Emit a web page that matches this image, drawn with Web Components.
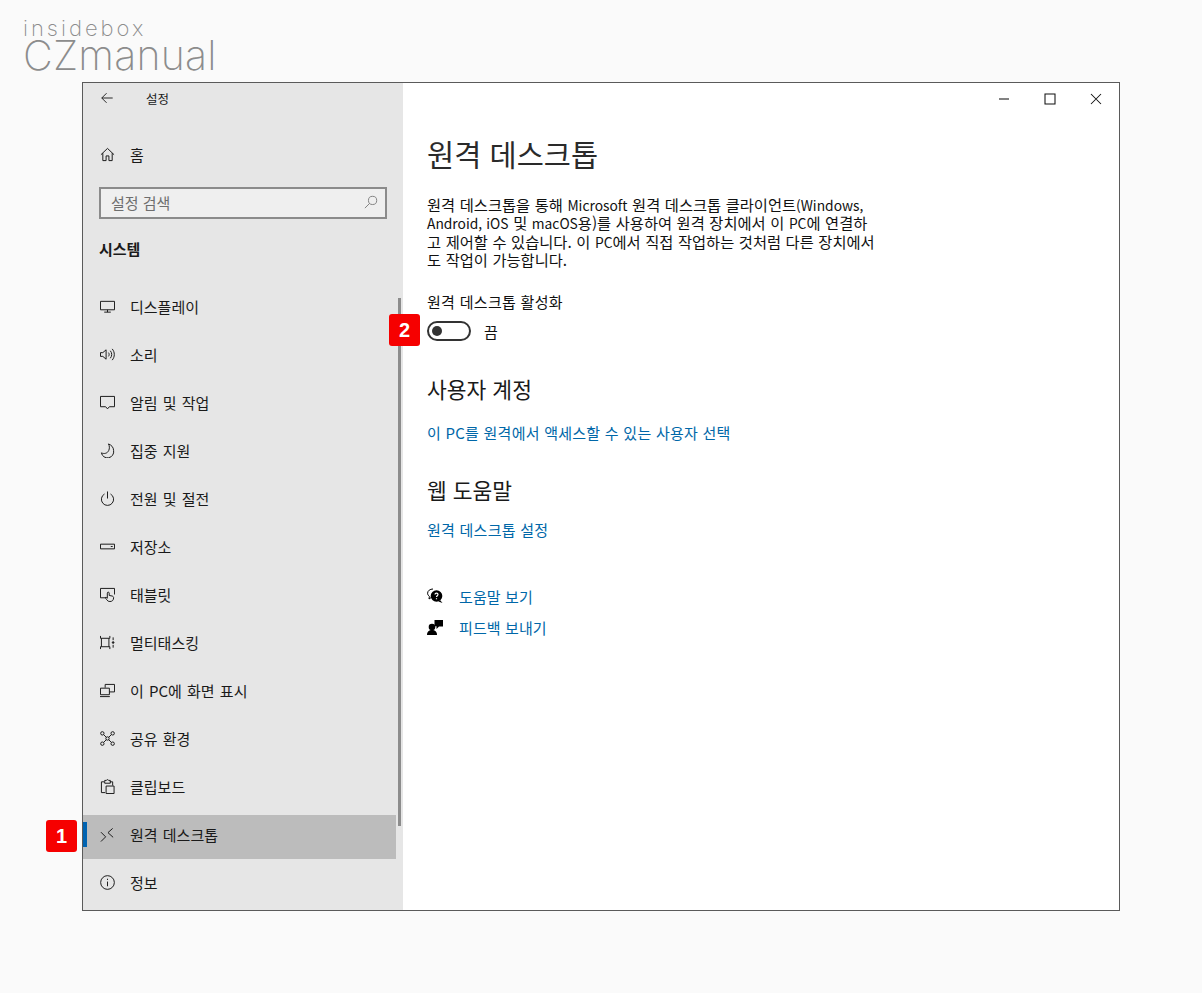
<!DOCTYPE html>
<html lang="ko">
<head>
<meta charset="utf-8">
<title>설정</title>
<style>
  html, body { margin: 0; padding: 0; background: #fafafa; }
  body { font-family: "Noto Sans CJK KR", "Noto Sans", sans-serif; height: 993px; overflow: hidden; }
</style>
</head>
<body>
<site-logo></site-logo>
<settings-window>
  <side-bar slot="side">
    <nav-item icon="display">디스플레이</nav-item>
    <nav-item icon="sound">소리</nav-item>
    <nav-item icon="notify">알림 및 작업</nav-item>
    <nav-item icon="moon">집중 지원</nav-item>
    <nav-item icon="power">전원 및 절전</nav-item>
    <nav-item icon="storage">저장소</nav-item>
    <nav-item icon="tablet">태블릿</nav-item>
    <nav-item icon="multitask">멀티태스킹</nav-item>
    <nav-item icon="project">이 PC에 화면 표시</nav-item>
    <nav-item icon="share">공유 환경</nav-item>
    <nav-item icon="clipboard">클립보드</nav-item>
    <nav-item icon="remote" selected badge="1">원격 데스크톱</nav-item>
    <nav-item icon="info">정보</nav-item>
  </side-bar>
  <content-pane slot="main"></content-pane>
</settings-window>

<script>
// 아이콘은 전부 16x16 기준 stroke 로 그림
const ICONS = {
  back: '<path d="M14.5 8H2M7.5 2.5 2 8l5.5 5.5"/>',
  home: '<path d="M1 8.2 8 1.5l7 6.700M3 6.500V14.500h3.500V9.500h3v5H13V6.500"/>',
  search: '<circle cx="9.800" cy="6.200" r="4.700"/><path d="M6.400 9.600 1 15"/>',
  display: '<path d="M.5 2.500h15v9H.5zM8 11.500v2.500M4.500 14h7"/>',
  sound: '<path d="M.5 6h2.500L6.500 3v10L3 10H.5zM9 6c1 1.200 1 2.800 0 4M11 4c2 2.400 2 5.600 0 8M13 2c3 3.600 3 8.400 0 12"/>',
  notify: '<path d="M.5 1.500h15v11h-5.500L8 14.800 6 12.500H.5z"/>',
  moon: '<path d="M9 1c3 1 5.500 3.500 5.500 7a6.500 6.500 0 0 1-13 2.500c3 1.500 6.500.5 7.800-2.500C10.300 6 10.300 3 9 1z"/>',
  power: '<path d="M8 .5v7.500M4.800 3.200a6.500 6.500 0 1 0 6.400 0"/>',
  storage: '<path d="M.5 5.500h15v5H.5zM11.500 8h2"/>',
  tablet: '<path d="M6.500 11.500H.5v-10h15V8"/><path d="M7.500 14c-1-1.500-1.700-2-1.700-2.800.6-.5 1.400 0 2 .8V6.500a1 1 0 0 1 2 0V9l3 .6c1 .2 1.700.8 1.700 1.800 0 2.500-1.300 4.100-3.900 4.100-1.500 0-2.400-.5-3.100-1.500z"/>',
  multitask: '<path d="M.5 1v2.500h10V1M.5 15v-2.500h10V15M1.500 3.500v9M9.500 3.500v9M14 2.500v3M14 10.500v3"/><circle cx="14" cy="8" r=".9" fill="currentColor"/>',
  project: '<path d="M5.500 5V1.500h10v8H10M.5 5.500h9.500v7H.5zM0 14.500h10.500"/>',
  share: '<circle cx="2.500" cy="2.500" r="1.800"/><circle cx="13.500" cy="2.500" r="1.800"/><circle cx="2.500" cy="13.500" r="1.800"/><circle cx="13.500" cy="13.500" r="1.800"/><circle cx="8" cy="8" r="1.800"/><path d="m3.800 3.800 3 3M12.200 3.800l-3 3M3.800 12.200l3-3M12.200 12.200l-3-3"/>',
  clipboard: '<path d="M4.500 3H1.500v11.500h4M10.500 3h3v4M5 3V1.500h1.800a1.300 1.300 0 0 1 2.400 0H11V4.500H5zM6.500 7.500h8.500v8H6.500z"/>',
  remote: '<path d="M1 5.500 6 10.500 1 15.500M13.500 1.500 8.500 6l5.500 5"/>',
  info: '<circle cx="8" cy="8" r="7.300"/><path d="M8 7v5M8 4v1.300"/>',
  minimize: '<path d="M3 8h10"/>',
  maximize: '<path d="M3 3h10v10H3z"/>',
  close: '<path d="M3 3l10 10M13 3 3 13"/>'
};

function iconSvg(name, size) {
  return `<svg width="${size}" height="${size}" viewBox="0 0 16 16" fill="none" stroke="currentColor" stroke-width="1.050">${ICONS[name]}</svg>`;
}

class SiteLogo extends HTMLElement {
  constructor() {
    super();
    this.attachShadow({ mode: "open" });
    this.shadowRoot.innerHTML = `
      <style>
        :host { display: block; height: 82px; box-sizing: border-box; padding: 17px 0 0 23px; color: #8c8c8c; font-family: Inter, Lato, sans-serif; font-weight: 200; }
        div { line-height: 1; }
        .a { font-size: 22px; letter-spacing: 3px; height: 18px; line-height: 22px; }
        .b { font-size: 41px; letter-spacing: .2px; height: 40px; line-height: 40px; }
      </style>
      <div class="a">insidebox</div>
      <div class="b">CZmanual</div>`;
  }
}

class SettingsWindow extends HTMLElement {
  constructor() {
    super();
    this.attachShadow({ mode: "open" });
    this.shadowRoot.innerHTML = `
      <style>
        :host { display: flex; position: relative; box-sizing: border-box; width: 1038px; height: 829px; margin-left: 82px; border: 1px solid #5a5a5a; background: #fff; color: #000; }
        .side { width: 320px; flex: none; }
        .main { flex: 1; min-width: 0; position: relative; }
        .ctrl { position: absolute; top: 0; right: 0; display: flex; }
        .ctrl span { width: 46px; height: 32px; display: flex; align-items: center; justify-content: center; color: #111; }
      </style>
      <div class="side"><slot name="side"></slot></div>
      <div class="main">
        <slot name="main"></slot>
        <div class="ctrl">
          <span>${iconSvg("minimize", 16)}</span>
          <span>${iconSvg("maximize", 16)}</span>
          <span>${iconSvg("close", 16)}</span>
        </div>
      </div>`;
  }
}

class SideBar extends HTMLElement {
  constructor() {
    super();
    this.attachShadow({ mode: "open" });
    this.shadowRoot.innerHTML = `
      <style>
        :host { display: block; position: relative; height: 827px; box-sizing: border-box; background: #e6e6e6; font-size: 15px; color: #1a1a1a; }
        .head { box-sizing: border-box; height: 32px; display: flex; align-items: center; padding: 0 0 2px 17px; font-size: 12.500px; }
        .head svg { margin-right: 32px; }
        .home { box-sizing: border-box; height: 44px; margin-top: 18px; display: flex; align-items: center; padding: 0 0 2px 17px; }
        .home svg { margin-right: 15px; }
        .search { box-sizing: border-box; height: 32px; margin: 10px 16px 0 16px; border: 2px solid #8b8b8b; background: #efefef; display: flex; align-items: center; justify-content: space-between; padding: 0 7px 2px 10px; color: #6e6e6e; }
        .search svg { color: #7a7a7a; }
        .group { height: 36px; margin-top: 13px; padding-left: 16px; line-height: 34px; font-weight: 700; font-size: 15px; }
        .list { margin-top: 19px; display: flex; flex-direction: column; gap: 4px; }
        .bar { position: absolute; top: 215px; right: 2px; width: 3px; height: 528px; background: #8c8c8c; }
      </style>
      <div class="head">${iconSvg("back", 14)}<span>설정</span></div>
      <div class="home">${iconSvg("home", 15)}<span>홈</span></div>
      <div class="search"><span>설정 검색</span>${iconSvg("search", 14)}</div>
      <div class="group">시스템</div>
      <div class="list"><slot></slot></div>
      <div class="bar"></div>`;
  }
}

class NavItem extends HTMLElement {
  constructor() {
    super();
    this.attachShadow({ mode: "open" });
  }
  connectedCallback() {
    const selected = this.hasAttribute("selected");
    const badge = this.getAttribute("badge");
    this.shadowRoot.innerHTML = `
      <style>
        :host { display: flex; align-items: center; position: relative; height: 44px; width: 313px; box-sizing: border-box; padding: 0 0 6px 17px; word-spacing: 1px; }
        :host([selected]) { background: #bcbcbc; }
        svg { flex: none; margin-right: 15px; }
        .mark { position: absolute; left: 0; top: 7px; width: 4px; height: 25px; background: #0063b1; }
      </style>
      ${selected ? '<div class="mark"></div>' : ""}
      ${iconSvg(this.getAttribute("icon"), 15)}
      <slot></slot>
      ${badge ? `<mark-badge style="left:-37px;top:5px">${badge}</mark-badge>` : ""}`;
  }
}

class MarkBadge extends HTMLElement {
  constructor() {
    super();
    this.attachShadow({ mode: "open" });
    this.shadowRoot.innerHTML = `
      <style>
        :host { position: absolute; display: flex; align-items: center; justify-content: center; width: 31px; height: 32px; border-radius: 3px; background: #f60000; color: #fff; font: 700 20px "Liberation Sans", sans-serif; }
      </style>
      <slot></slot>`;
  }
}

class ToggleSwitch extends HTMLElement {
  constructor() {
    super();
    this.attachShadow({ mode: "open" });
    this.shadowRoot.innerHTML = `
      <style>
        :host { display: flex; align-items: center; gap: 13px; height: 20px; }
        .track { box-sizing: border-box; width: 44px; height: 20px; border: 2px solid #333; border-radius: 10px; display: flex; align-items: center; padding-left: 3px; }
        .knob { width: 10px; height: 10px; border-radius: 50%; background: #333; }
      </style>
      <div class="track"><div class="knob"></div></div>
      <slot></slot>`;
  }
}

class HelpLink extends HTMLElement {
  constructor() {
    super();
    this.attachShadow({ mode: "open" });
    this.shadowRoot.innerHTML = `
      <style>
        :host { display: flex; align-items: center; gap: 16px; height: 20px; color: #0067a8; letter-spacing: .1px; }
        ::slotted(svg) { flex: none; color: #000; }
      </style>
      <slot name="icon"></slot>
      <slot></slot>`;
  }
}

class ContentPane extends HTMLElement {
  constructor() {
    super();
    this.attachShadow({ mode: "open" });
    this.shadowRoot.innerHTML = `
      <style>
        :host { display: block; position: relative; box-sizing: border-box; height: 827px; padding: 0 0 0 24px; font-size: 15px; color: #111; }
        h1, h2, p { margin: 0; font-weight: 400; }
        h1 { font-size: 29.500px; line-height: 40px; padding-top: 50px; color: #2a2a2a; }
        p.desc { font-size: 15.300px; line-height: 18.300px; margin-top: 22px; word-spacing: .3px; }
        .en { font-size: 13.800px; line-height: 0; }
        .lab { margin-top: 24px; line-height: 20px; letter-spacing: .3px; }
        .tog { position: relative; margin-top: 9px; }
        h2 { font-size: 21.500px; line-height: 28px; color: #1a1a1a; }
        .acct { margin-top: 34px; }
        .link { color: #0067a8; line-height: 20px; letter-spacing: .25px; }
        .l1 { margin-top: 20px; }
        .web { margin-top: 33px; }
        .l2 { margin-top: 16px; }
        .help { margin-top: 46px; display: flex; flex-direction: column; gap: 11px; }
      </style>
      <h1>원격 데스크톱</h1>
      <p class="desc">원격 데스크톱을 통해 <span class="en">Microsoft</span> 원격 데스크톱 클라이언트<span class="en">(Windows,</span><br><span class="en">Android, iOS</span> 및 <span class="en">macOS</span>용)를 사용하여 원격 장치에서 이 <span class="en">PC</span>에 연결하<br>고 제어할 수 있습니다. 이 <span class="en">PC</span>에서 직접 작업하는 것처럼 다른 장치에서<br>도 작업이 가능합니다.</p>
      <div class="lab">원격 데스크톱 활성화</div>
      <div class="tog">
        <toggle-switch>끔</toggle-switch>
        <mark-badge style="left:-38px;top:-7px">2</mark-badge>
      </div>
      <h2 class="acct">사용자 계정</h2>
      <div class="link l1">이 PC를 원격에서 액세스할 수 있는 사용자 선택</div>
      <h2 class="web">웹 도움말</h2>
      <div class="link l2">원격 데스크톱 설정</div>
      <div class="help">
        <help-link><svg slot="icon" width="16" height="16" viewBox="0 0 16 16"><path d="M6 1C3 1 .6 2.800.6 5.200c0 1.300.7 2.400 1.800 3.200L2 11l2.500-1.700" fill="none" stroke="currentColor"/><circle cx="9.500" cy="8" r="5.800" fill="currentColor"/><path d="M13 12l2.500 3-4-1.500z" fill="currentColor"/><path d="M8 6.500c0-1.800 3-1.800 3 0 0 1.200-1.500 1.200-1.500 2.500M9.500 10.200v1" fill="none" stroke="#fff" stroke-width="1.200"/></svg>도움말 보기</help-link>
        <help-link><svg slot="icon" width="16" height="16" viewBox="0 0 16 16" fill="currentColor"><circle cx="5" cy="8" r="3.300"/><path d="M0 16c0-3.500 2-5 5-5s5 1.500 5 5z"/><path d="M7.500 1H16v6.500h-4L9.500 10V7.300H7.500z"/></svg>피드백 보내기</help-link>
      </div>`;
  }
}

customElements.define("mark-badge", MarkBadge);
customElements.define("toggle-switch", ToggleSwitch);
customElements.define("help-link", HelpLink);
customElements.define("nav-item", NavItem);
customElements.define("side-bar", SideBar);
customElements.define("content-pane", ContentPane);
customElements.define("settings-window", SettingsWindow);
customElements.define("site-logo", SiteLogo);
</script>
</body>
</html>
